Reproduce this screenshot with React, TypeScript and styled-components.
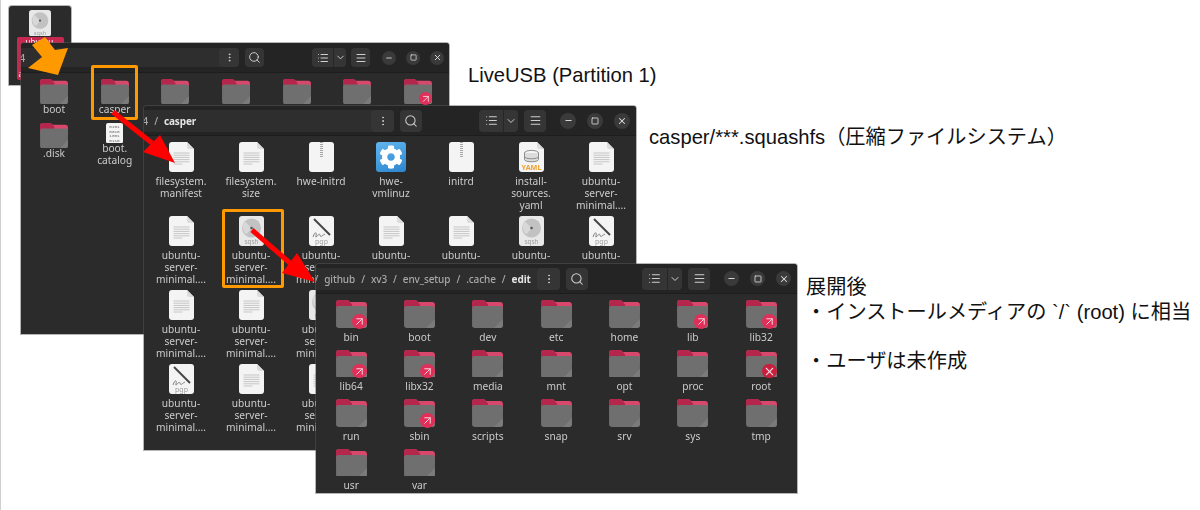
import styled, { createGlobalStyle } from 'styled-components';
import { ArrowUpRight, ChevronDown, EllipsisVertical, List, Menu, Minus, Search, Square, X } from 'lucide-react';
import { FaCog } from 'react-icons/fa';

const GlobalStyle = createGlobalStyle`
  html, body {
    margin: 0;
    padding: 0;
    background: #fff;
  }
`;

type FileKind = 'doc' | 'zip' | 'sqsh' | 'pgp' | 'yaml' | 'bin' | 'gear';
type Mark = 'link' | 'x';

interface HeaderSize {
  btn: number;
  pathWidth: number;
  viewWidth: number;
  circle: number;
  circleGap: number;
  controlsGap: number;
  icon: number;
  padRight: number;
}

const UBUNTU = 'ubuntu-\nserver-\nminimal....';

const casperFiles: { kind: FileKind; label: string }[] = [
  { kind: 'doc', label: 'filesystem.\nmanifest' },
  { kind: 'doc', label: 'filesystem.\nsize' },
  { kind: 'zip', label: 'hwe-initrd' },
  { kind: 'gear', label: 'hwe-\nvmlinuz' },
  { kind: 'zip', label: 'initrd' },
  { kind: 'yaml', label: 'install-\nsources.\nyaml' },
  { kind: 'doc', label: UBUNTU },
  { kind: 'doc', label: UBUNTU },
  { kind: 'sqsh', label: UBUNTU },
  { kind: 'pgp', label: UBUNTU },
  { kind: 'doc', label: UBUNTU },
  { kind: 'doc', label: UBUNTU },
  { kind: 'sqsh', label: UBUNTU },
  { kind: 'pgp', label: UBUNTU },
  { kind: 'doc', label: UBUNTU },
  { kind: 'doc', label: UBUNTU },
  { kind: 'sqsh', label: UBUNTU },
  { kind: 'doc', label: UBUNTU },
  { kind: 'doc', label: UBUNTU },
  { kind: 'doc', label: UBUNTU },
  { kind: 'doc', label: UBUNTU },
  { kind: 'pgp', label: UBUNTU },
  { kind: 'doc', label: UBUNTU },
  { kind: 'doc', label: UBUNTU },
];

const rootFolders: { label: string; mark?: Mark }[] = [
  { label: 'bin', mark: 'link' },
  { label: 'boot' },
  { label: 'dev' },
  { label: 'etc' },
  { label: 'home' },
  { label: 'lib', mark: 'link' },
  { label: 'lib32', mark: 'link' },
  { label: 'lib64', mark: 'link' },
  { label: 'libx32', mark: 'link' },
  { label: 'media' },
  { label: 'mnt' },
  { label: 'opt' },
  { label: 'proc' },
  { label: 'root', mark: 'x' },
  { label: 'run' },
  { label: 'sbin', mark: 'link' },
  { label: 'scripts' },
  { label: 'snap' },
  { label: 'srv' },
  { label: 'sys' },
  { label: 'tmp' },
  { label: 'usr' },
  { label: 'var' },
];

const FolderIcon = ({ width, mark }: { width: number; mark?: Mark }) => (
  <IconSlot $w={width} $h={width * 0.9}>
    <svg width={width} height={width * 0.9} viewBox="0 0 31 28">
      <path d="M0 13V3a3 3 0 0 1 3-3h7c2 0 3 1 4 2h14a3 3 0 0 1 3 3v8z" fill="#d8486c" />
      <path d="M0 13V3a3 3 0 0 1 3-3h7c2 0 3 1 4 2l2 2.5v8.5z" fill="#b5264c" />
      <rect x="0" y="6" width="31" height="22" rx="2.5" fill="#6f6f6f" />
      <path d="M31 19v6a3 3 0 0 1-3 3h-6z" fill="#7b7b7b" />
    </svg>
    {mark && (
      <Badge $size={width * 0.47} $mark={mark}>
        {mark === 'link' ? (
          <ArrowUpRight size={width * 0.42} strokeWidth={1.8} />
        ) : (
          <X size={width * 0.42} strokeWidth={2} />
        )}
      </Badge>
    )}
  </IconSlot>
);

const PAGE = 'M3 0H18L25 7V27a3 3 0 0 1-3 3H3a3 3 0 0 1-3-3V3a3 3 0 0 1 3-3z';
const lines = [10.5, 12.7, 14.9, 17.1, 19.3, 21.5];

const FileIcon = ({ kind, width = 25 }: { kind: FileKind; width?: number }) => {
  if (kind === 'gear') {
    return (
      <GearTile>
        <FaCog size={24} color="#fff" />
      </GearTile>
    );
  }
  return (
    <svg width={width} height={(width * 30) / 25} viewBox="0 0 25 30">
      {kind === 'doc' || kind === 'yaml' ? (
        <>
          <path d={PAGE} fill="#f4f4f4" />
          <path d="M18 0L25 7H20a2 2 0 0 1-2-2z" fill="#dcdcdc" />
        </>
      ) : (
        <rect width="25" height="30" rx="3" fill={kind === 'sqsh' ? '#e8e8e8' : '#f4f4f4'} />
      )}
      {kind === 'doc' && lines.map((y, i) => (
        <rect key={y} x="4.5" y={y} width={i === 5 ? 9 : 16} height="1" fill="#c6c6c6" />
      ))}
      {kind === 'zip' && (
        <path d="M12.5 0V16" stroke="#a6a6a6" strokeWidth="3" strokeDasharray="1 1" />
      )}
      {kind === 'sqsh' && (
        <>
          <circle cx="12.5" cy="12" r="9.5" fill="#c2c2c2" />
          <path d="M5.8 5.3L12.5 12L7.5 18.6A9.5 9.5 0 0 1 5.8 5.3z" fill="#d8d8d8" />
          <circle cx="12.5" cy="12" r="1.3" fill="#555" />
          <SvgText x="12.5" y="28" fontSize="6.5" fill="#a0a0a0">sqsh</SvgText>
        </>
      )}
      {kind === 'pgp' && (
        <>
          <path d="M5 3L21 19" stroke="#454545" strokeWidth="2" />
          <path d="M4 21c2-6 4-5 3-1s3-4 4-1 1 1 5-1" stroke="#777" strokeWidth="0.9" fill="none" />
          <SvgText x="12.5" y="28" fontSize="7" fill="#a0a0a0">pgp</SvgText>
        </>
      )}
      {kind === 'yaml' && (
        <>
          <ellipse cx="12.5" cy="11" rx="7" ry="2.6" fill="none" stroke="#8c8c8c" strokeWidth="1" />
          <path d="M5.5 11v6.5c0 3 14 3 14 0V11M5.5 14.5c0 3 14 3 14 0" fill="#dcdcdc" stroke="#8c8c8c" strokeWidth="1" />
          <SvgText x="12.5" y="27.5" fontSize="7.2" fontWeight="700" fill="#f0a030">YAML</SvgText>
        </>
      )}
      {kind === 'bin' && ['0101', '0010', '1001', '0110'].map((row, i) => (
        <SvgMono key={row} x="12.5" y={8 + i * 6.4} fontSize="6.4" fill="#666">{row}</SvgMono>
      ))}
    </svg>
  );
};

const WindowHeader = ({ size, crumbs }: { size: HeaderSize; crumbs: string[] }) => (
  <Header>
    <PathBar $w={size.pathWidth} $btn={size.btn}>
      <Crumbs>
        {crumbs.map((c, i) => (
          <Crumb key={i} $current={i === crumbs.length - 1 && crumbs.length > 1}>{c}</Crumb>
        ))}
      </Crumbs>
      <HeaderButton $w={size.btn + 1} $h={size.btn}>
        <EllipsisVertical size={size.icon} strokeWidth={2} />
      </HeaderButton>
    </PathBar>
    <HeaderButton $w={size.btn} $h={size.btn}>
      <Search size={size.icon + 2} strokeWidth={1.8} />
    </HeaderButton>
    <RightTools $gap={size.controlsGap} $pad={size.padRight}>
      <HeaderGroup>
        <HeaderButton $w={size.viewWidth * 0.62} $h={size.btn}>
          <List size={size.icon + 1} strokeWidth={2} />
        </HeaderButton>
        <HeaderButton $w={size.viewWidth * 0.38} $h={size.btn} $divided>
          <ChevronDown size={size.icon} strokeWidth={2} />
        </HeaderButton>
      </HeaderGroup>
      <HeaderButton $w={size.btn} $h={size.btn}>
        <Menu size={size.icon + 1} strokeWidth={2} />
      </HeaderButton>
      <WindowControls $gap={size.circleGap} $lead={size.controlsGap}>
        <ControlCircle $size={size.circle}><Minus size={size.icon - 3} strokeWidth={2.5} /></ControlCircle>
        <ControlCircle $size={size.circle}><Square size={size.icon - 4} strokeWidth={2.5} /></ControlCircle>
        <ControlCircle $size={size.circle}><X size={size.icon - 2} strokeWidth={2.5} /></ControlCircle>
      </WindowControls>
    </RightTools>
  </Header>
);

const App = () => (
  <Slide>
    <GlobalStyle />

    <Window $x={9} $y={6} $w={62} $h={79}>
      <DriveList>
        <FileIcon kind="sqsh" width={22} />
        <SelectedDrive>
          <DriveName>ubuntu</DriveName>
          <DriveName>a</DriveName>
        </SelectedDrive>
      </DriveList>
    </Window>

    <Window $x={21} $y={43} $w={428} $h={291}>
      <WindowHeader
        crumbs={['4']}
        size={{ btn: 19, pathWidth: 218, viewWidth: 34, circle: 14, circleGap: 10, controlsGap: 5, icon: 11, padRight: 5 }}
      />
      <IconGrid $cols={7} $colW={60.67} $rowH={44} $padX={2.7} $padY={6} $labelGap={0}>
        <Cell><FolderIcon width={28} /><Label>boot</Label></Cell>
        <Cell><FolderIcon width={28} /><Label>casper</Label></Cell>
        <Cell><FolderIcon width={28} /></Cell>
        <Cell><FolderIcon width={28} /></Cell>
        <Cell><FolderIcon width={28} /></Cell>
        <Cell><FolderIcon width={28} /></Cell>
        <Cell><FolderIcon width={28} mark="link" /></Cell>
        <Cell><FolderIcon width={28} /><Label>.disk</Label></Cell>
        <Cell>
          <FileIcon kind="bin" width={21} />
          <Label>boot.{'\n'}catalog</Label>
        </Cell>
      </IconGrid>
    </Window>

    <Window $x={144} $y={106} $w={492} $h={344}>
      <WindowHeader
        crumbs={['4', '/', 'casper']}
        size={{ btn: 22, pathWidth: 250, viewWidth: 39, circle: 16, circleGap: 11, controlsGap: 6, icon: 12, padRight: 6 }}
      />
      <IconGrid $cols={7} $colW={70} $rowH={74} $padX={2} $padY={6} $labelGap={4}>
        {casperFiles.map((f, i) => (
          <Cell key={i}>
            <FileIcon kind={f.kind} />
            <Label>{f.label}</Label>
          </Cell>
        ))}
      </IconGrid>
    </Window>

    <Window $x={316} $y={264} $w={481} $h={229}>
      <WindowHeader
        crumbs={['/', 'github', '/', 'xv3', '/', 'env_setup', '/', '.cache', '/', 'edit']}
        size={{ btn: 22, pathWidth: 244, viewWidth: 40, circle: 15, circleGap: 11, controlsGap: 6, icon: 12, padRight: 6 }}
      />
      <IconGrid $cols={7} $colW={68.33} $rowH={49.5} $padX={1} $padY={6} $labelGap={4}>
        {rootFolders.map((f) => (
          <Cell key={f.label}>
            <FolderIcon width={31} mark={f.mark} />
            <Label>{f.label}</Label>
          </Cell>
        ))}
      </IconGrid>
    </Window>

    <Highlight $x={91} $y={65} $w={47} $h={55} />
    <Highlight $x={222} $y={209} $w={62} $h={79} />

    <ArrowLayer width="1200" height="510" viewBox="0 0 1200 510">
      <polygon points="45,37 55,50 68,48 58,75 28,68 42,57 32,45" fill="#ff9900" />
      <path d="M113 112L152 143" stroke="#ff0000" strokeWidth="5" />
      <polygon points="175,163 160,135 143,152" fill="#ff0000" />
      <path d="M252 230L290 263" stroke="#ff0000" strokeWidth="5" />
      <polygon points="315,282 297,253 282,273" fill="#ff0000" />
    </ArrowLayer>

    <Caption $x={468} $y={63}>LiveUSB (Partition 1)</Caption>
    <Caption $x={649} $y={125}>casper/***.squashfs（圧縮ファイルシステム）</Caption>
    <Notes>
      <NoteLine>展開後</NoteLine>
      <NoteLine>・インストールメディアの `/` (root) に相当</NoteLine>
      <NoteLine>&nbsp;</NoteLine>
      <NoteLine>・ユーザは未作成</NoteLine>
    </Notes>
  </Slide>
);

export default App;

const Slide = styled.div`
  position: relative;
  width: 1200px;
  height: 510px;
  box-sizing: border-box;
  border-left: 1px solid #cfcfcf;
  background: #fff;
  overflow: hidden;
  font-family: 'Liberation Sans', 'Noto Sans CJK JP', sans-serif;
`;

const Window = styled.div<{ $x: number; $y: number; $w: number; $h: number }>`
  position: absolute;
  left: ${(p) => p.$x - 1}px;
  top: ${(p) => p.$y}px;
  width: ${(p) => p.$w}px;
  height: ${(p) => p.$h}px;
  box-sizing: border-box;
  display: flex;
  flex-direction: column;
  overflow: hidden;
  background: #2b2b2b;
  box-shadow: 0 0 0 1px rgba(90, 90, 90, 0.45);
  border-radius: 3px 3px 0 0;
  filter: blur(0.3px);
`;

const Header = styled.header`
  flex: none;
  display: flex;
  align-items: center;
  gap: 6px;
  height: 29px;
  background: #242424;
  border-bottom: 1px solid #1d1d1d;
`;

const PathBar = styled.div<{ $w: number; $btn: number }>`
  flex: none;
  width: ${(p) => p.$w}px;
  height: ${(p) => p.$btn}px;
  display: flex;
  align-items: center;
  justify-content: space-between;
  background: #2e2e2e;
  border-radius: 0 4px 4px 0;
`;

const Crumbs = styled.div`
  display: flex;
  align-items: center;
  gap: 6px;
  min-width: 0;
  margin-left: -1.5px;
  font: 500 10px 'Noto Sans', sans-serif;
  letter-spacing: -0.1px;
  color: #a8a8a8;
  white-space: nowrap;
`;

const Crumb = styled.span<{ $current: boolean }>`
  color: ${(p) => (p.$current ? '#e4e4e4' : '#a8a8a8')};
  font-weight: ${(p) => (p.$current ? 700 : 500)};
`;

const HeaderButton = styled.div<{ $w: number; $h: number; $divided?: boolean }>`
  flex: none;
  width: ${(p) => p.$w}px;
  height: ${(p) => p.$h}px;
  display: flex;
  align-items: center;
  justify-content: center;
  background: #353535;
  border-radius: 4px;
  color: #cfcfcf;
  ${(p) => p.$divided && 'border-left: 1px solid #262626; box-sizing: border-box;'}
`;

const RightTools = styled.div<{ $gap: number; $pad: number }>`
  margin-left: auto;
  display: flex;
  align-items: center;
  gap: ${(p) => p.$gap}px;
  padding-right: ${(p) => p.$pad}px;
`;

const HeaderGroup = styled.div`
  display: flex;
  ${HeaderButton}:first-child {
    border-radius: 4px 0 0 4px;
  }
  ${HeaderButton}:last-child {
    border-radius: 0 4px 4px 0;
  }
`;

const WindowControls = styled.div<{ $gap: number; $lead: number }>`
  display: flex;
  gap: ${(p) => p.$gap}px;
  margin-left: ${(p) => p.$lead + 2}px;
`;

const ControlCircle = styled.div<{ $size: number }>`
  width: ${(p) => p.$size}px;
  height: ${(p) => p.$size}px;
  display: flex;
  align-items: center;
  justify-content: center;
  border-radius: 50%;
  background: #3a3a3a;
  color: #e0e0e0;
`;

const IconGrid = styled.div<{ $cols: number; $colW: number; $rowH: number; $padX: number; $padY: number; $labelGap: number }>`
  display: grid;
  grid-template-columns: repeat(${(p) => p.$cols}, ${(p) => p.$colW}px);
  grid-auto-rows: ${(p) => p.$rowH}px;
  padding: ${(p) => p.$padY}px 0 0 ${(p) => p.$padX}px;
  --label-gap: ${(p) => p.$labelGap}px;
`;

const Cell = styled.div`
  display: flex;
  flex-direction: column;
  align-items: center;
`;

const Label = styled.div`
  margin-top: var(--label-gap);
  font: 400 10.2px/11.8px 'Noto Sans', sans-serif;
  color: #cbcbcb;
  text-align: center;
  white-space: pre-line;
`;

const IconSlot = styled.div<{ $w: number; $h: number }>`
  position: relative;
  flex: none;
  width: ${(p) => p.$w}px;
  height: ${(p) => p.$h}px;
  svg {
    display: block;
  }
`;

const Badge = styled.span<{ $size: number; $mark: Mark }>`
  position: absolute;
  right: 0;
  bottom: -1px;
  width: ${(p) => p.$size}px;
  height: ${(p) => p.$size}px;
  display: flex;
  align-items: center;
  justify-content: center;
  border-radius: 50%;
  background: ${(p) => (p.$mark === 'x' ? '#c71f3d' : '#e0305a')};
  color: #f6dbe1;
`;

const GearTile = styled.div`
  flex: none;
  width: 30px;
  height: 30px;
  display: flex;
  align-items: center;
  justify-content: center;
  border-radius: 3px;
  background: linear-gradient(160deg, #62b6ee, #2c86d0);
`;

const SvgText = styled.text`
  font-family: 'Noto Sans', sans-serif;
  text-anchor: middle;
`;

const SvgMono = styled.text`
  font-family: 'Liberation Mono', monospace;
  text-anchor: middle;
`;

const DriveList = styled.div`
  display: flex;
  flex-direction: column;
  align-items: center;
  gap: 1px;
  padding-top: 4px;
`;

const SelectedDrive = styled.div`
  width: 47px;
  height: 43px;
  box-sizing: border-box;
  display: flex;
  flex-direction: column;
  justify-content: space-between;
  padding: 0 2px 2px;
  background: #c6284f;
  border-radius: 2px;
`;

const DriveName = styled.span`
  color: #fff;
  font: 400 8px/9px 'Noto Sans', sans-serif;
  &:first-child {
    margin-left: 7px;
  }
`;

const Highlight = styled.div<{ $x: number; $y: number; $w: number; $h: number }>`
  position: absolute;
  left: ${(p) => p.$x - 1}px;
  top: ${(p) => p.$y}px;
  width: ${(p) => p.$w}px;
  height: ${(p) => p.$h}px;
  box-sizing: border-box;
  border: 3px solid #ff9900;
  border-radius: 2px;
`;

const ArrowLayer = styled.svg`
  position: absolute;
  left: -1px;
  top: 0;
  pointer-events: none;
`;

const Caption = styled.div<{ $x: number; $y: number }>`
  position: absolute;
  left: ${(p) => p.$x - 1}px;
  top: ${(p) => p.$y}px;
  font-size: 20.2px;
  line-height: 24px;
  color: #111;
  white-space: nowrap;
`;

const Notes = styled.div`
  position: absolute;
  left: 805px;
  top: 275px;
  color: #111;
  font-size: 20.2px;
`;

const NoteLine = styled.div`
  line-height: 24.6px;
  white-space: nowrap;
`;
